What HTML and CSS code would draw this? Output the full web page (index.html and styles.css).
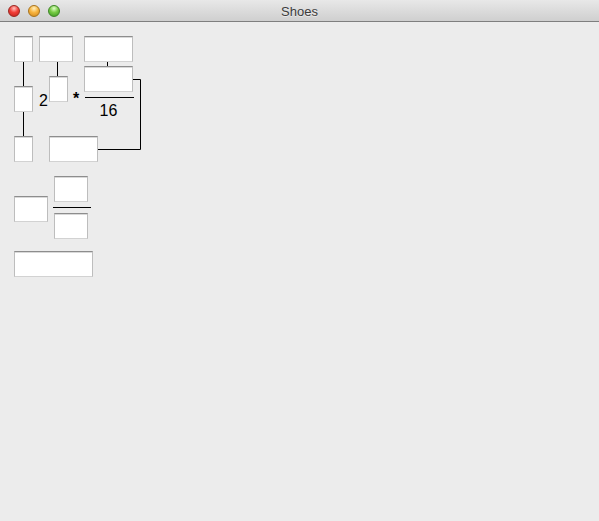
FILE: index.html
```html
<!DOCTYPE html>
<html>
<head>
<meta charset="utf-8">
<title>Shoes</title>
<link rel="stylesheet" href="styles.css">
</head>
<body>
<div class="window">
  <header class="titlebar">
    <div class="lights">
      <span class="light red"></span>
      <span class="light yellow"></span>
      <span class="light green"></span>
    </div>
    <div class="title">Shoes</div>
  </header>
  <main class="content">
    <section class="expr expr-one">
      <div class="row row-top">
        <div class="field w19"></div>
        <div class="field w34 gap6"></div>
        <div class="field w49 gap11"></div>
      </div>
      <div class="row row-mid">
        <div class="field w19 mid-left"></div>
        <span class="num two">2</span>
        <div class="field w19 mid-exp"></div>
        <span class="op star">*</span>
        <div class="frac frac-one">
          <div class="field w49"></div>
          <div class="bar bar49"></div>
          <div class="denom">16</div>
        </div>
      </div>
      <div class="row row-bot">
        <div class="field w19"></div>
        <div class="field w49 gap16"></div>
      </div>
      <svg class="wires" width="130" height="130" viewBox="0 0 130 130">
        <g stroke="#000" stroke-width="1" fill="none">
          <path d="M9.5 26 V50"/>
          <path d="M9.5 76 V100"/>
          <path d="M43.5 26 V40"/>
          <path d="M93.5 26 V30"/>
          <path d="M119 43.5 H126.5 V113.5 H84"/>
        </g>
      </svg>
    </section>
    <section class="expr expr-two">
      <div class="field w34 lone"></div>
      <div class="frac frac-two">
        <div class="field w34"></div>
        <div class="bar bar38"></div>
        <div class="field w34"></div>
      </div>
    </section>
    <section class="expr expr-three">
      <div class="field w79"></div>
    </section>
  </main>
</div>
</body>
</html>
```
FILE: styles.css
```css
html, body {
  margin: 0;
  padding: 0;
  background: #ececec;
}
.window {
  width: 599px;
  height: 521px;
  background: #ececec;
  font-family: "Liberation Sans", Arial, sans-serif;
  overflow: hidden;
}
.titlebar {
  position: relative;
  height: 21px;
  background: linear-gradient(#e8e8e8, #cfcfcf);
  border-bottom: 1px solid #7f7f7f;
  display: flex;
  align-items: center;
  justify-content: center;
}
.lights {
  position: absolute;
  left: 8px;
  top: 5px;
  display: flex;
  gap: 8px;
}
.light {
  width: 12px;
  height: 12px;
  border-radius: 50%;
  box-sizing: border-box;
}
.red {
  background: radial-gradient(circle at 50% 25%, #ffc4c0 0, #f2403a 45%, #c0201a 100%);
  border: 1px solid #9a2620;
}
.yellow {
  background: radial-gradient(circle at 50% 25%, #fff0c0 0, #f8b540 45%, #d1861a 100%);
  border: 1px solid #a8731c;
}
.green {
  background: radial-gradient(circle at 50% 25%, #e1ffcb 0, #78cc45 45%, #3a9622 100%);
  border: 1px solid #3d8626;
}
.title {
  font-size: 13px;
  color: #3c3c3c;
  line-height: 21px;
  padding-top: 1px;
  text-shadow: 0 1px 0 rgba(255,255,255,0.5);
}
.content {
  padding: 14px 0 0 14px;
}
.expr {
  display: flex;
}
.expr-one {
  position: relative;
  flex-direction: column;
  width: 130px;
}
.row {
  display: flex;
  align-items: flex-start;
}
.row-mid {
  height: 74px;
}
.field {
  box-sizing: border-box;
  height: 26px;
  background: #fff;
  border: 1px solid #bdbdbd;
  border-top-color: #8d8d8d;
  border-bottom-color: #d2d2d2;
  box-shadow: inset 0 1px 0 #d9d9d9;
}
.w19 { width: 19px; }
.w34 { width: 34px; }
.w49 { width: 49px; }
.w79 { width: 79px; }
.gap6 { margin-left: 6px; }
.gap11 { margin-left: 11px; }
.gap16 { margin-left: 16px; }
.mid-left { margin-top: 24px; }
.num, .op, .denom {
  font-size: 16px;
  line-height: 18px;
  color: #000;
}
.two {
  margin-top: 30px;
  margin-left: 6px;
  width: 10px;
}
.mid-exp { margin-top: 14px; }
.star {
  margin-top: 28px;
  margin-left: 5px;
  width: 6px;
  font-weight: bold;
}
.frac {
  display: flex;
  flex-direction: column;
  align-items: center;
}
.frac-one {
  margin-top: 4px;
  margin-left: 4px;
}
.bar {
  height: 1px;
  background: #000;
}
.bar49 {
  width: 49px;
  margin: 5px 0 0 2px;
}
.denom {
  margin-top: 4px;
  text-align: center;
}
.wires {
  position: absolute;
  left: 0;
  top: 0;
  pointer-events: none;
}
.expr-two {
  margin-top: 14px;
  align-items: flex-start;
}
.lone { margin-top: 20px; }
.frac-two {
  margin-left: 5px;
  width: 38px;
}
.bar38 {
  width: 38px;
  margin: 5px 0;
}
.frac-two .field { margin-left: 1px; align-self: flex-start; }
.expr-three {
  margin-top: 12px;
}
```
